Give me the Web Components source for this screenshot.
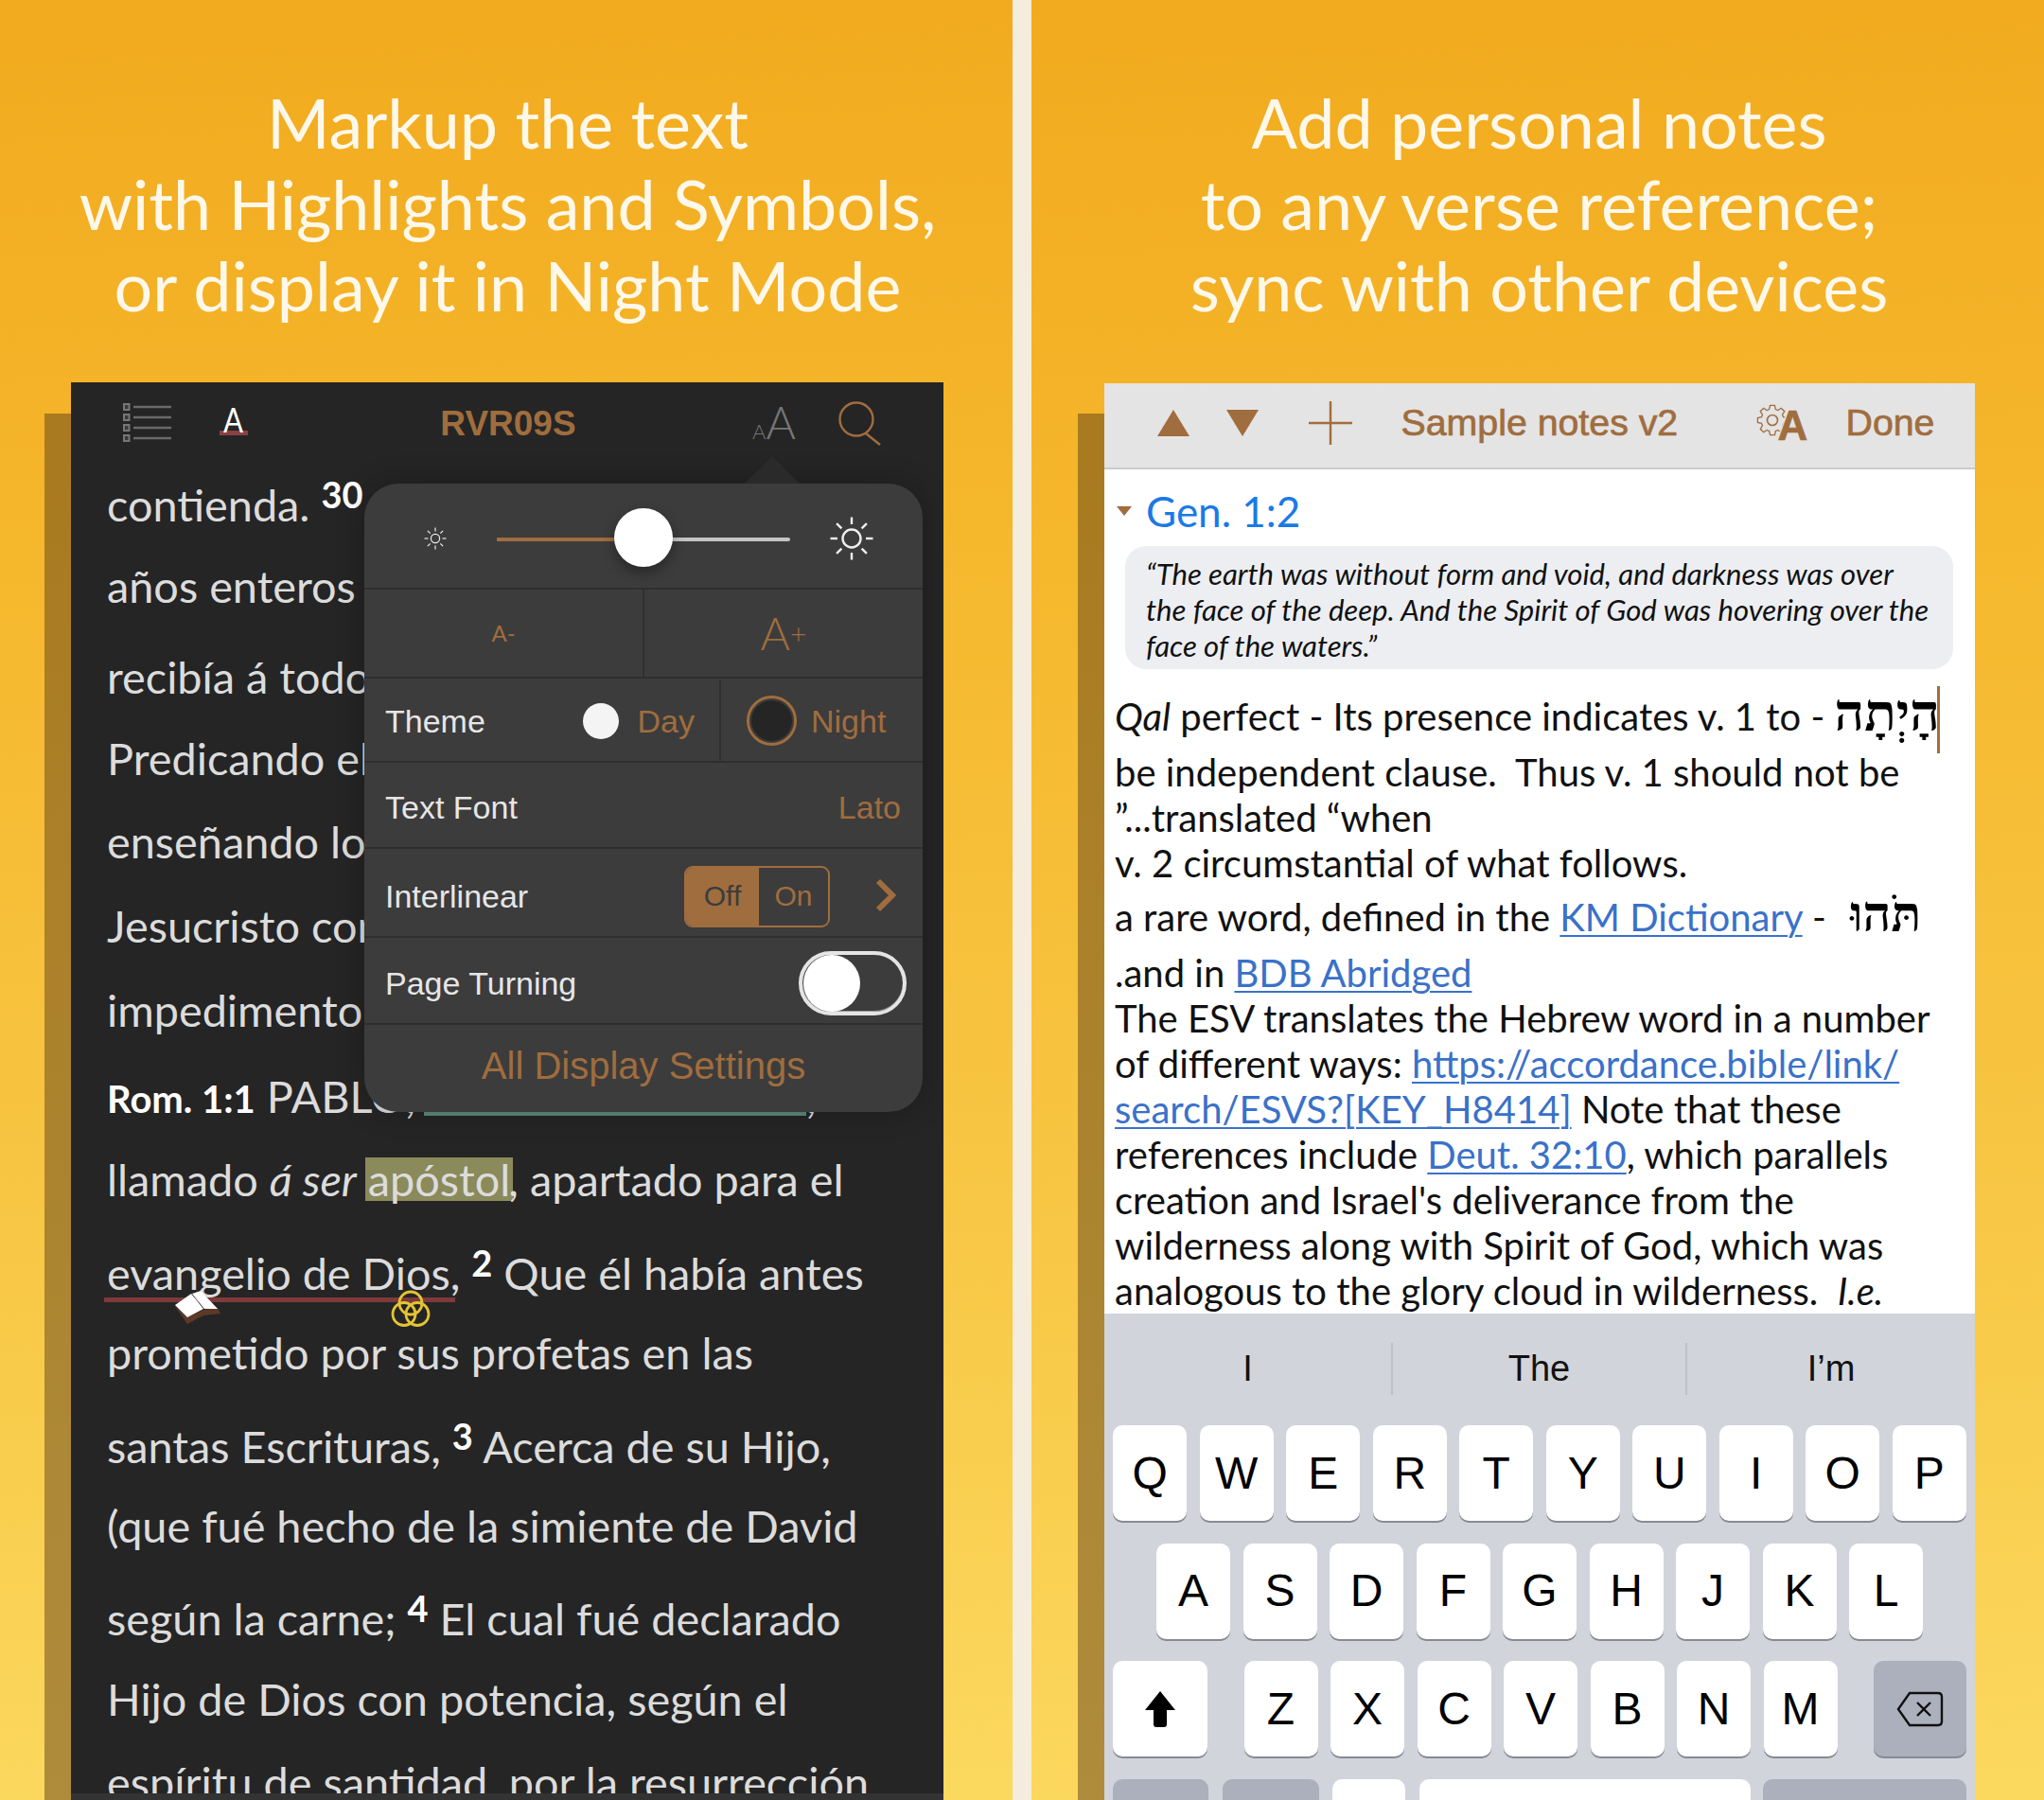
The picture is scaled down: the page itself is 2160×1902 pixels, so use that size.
<!DOCTYPE html>
<html lang="es">
<head>
<meta charset="utf-8">
<title>Accordance</title>
<style>
  html, body { margin: 0; padding: 0; }
  body { width: 2160px; height: 1902px; overflow: hidden; background: #f4ecdc; font-family: "Lato", sans-serif; }
  #page { display: flex; justify-content: space-between; width: 2160px; height: 1902px; }
  promo-panel.right { --ml: 77px; --mr: 73px; }
</style>
</head>
<body>
<div id="page">
  <promo-panel>
    <span slot="title">Markup the text<br>with Highlights and Symbols,<br>or display it in Night Mode</span>
    <night-reader></night-reader>
  </promo-panel>
  <promo-panel class="right">
    <span slot="title">Add personal notes<br>to any verse reference;<br>sync with other devices</span>
    <notes-screen></notes-screen>
  </promo-panel>
</div>

<script>
const ACCENT = '#a06d3e';

// yellow panel: heading on top, device below with its darker drop edge
class PromoPanel extends HTMLElement {
  constructor() {
    super();
    this.attachShadow({mode: 'open'});
    this.shadowRoot.innerHTML = `
      <style>
        :host {
          display: flex; flex-direction: column; align-items: stretch;
          width: 1070px; height: 1902px; overflow: hidden;
          background: linear-gradient(178deg, #f2aa1e 0%, #f5b72c 30%, #f8c846 70%, #fbd95f 100%);
          box-sizing: border-box;
        }
        .title {
          height: 404px; box-sizing: border-box; padding: 86px 0 0 3px;
          font: 400 71.8px/86px "Lato", sans-serif; color: #fdf8ea; text-align: center;
        }
        .device { position: relative; flex: 1; margin: 0 var(--mr, 73px) 0 var(--ml, 75px); min-height: 0; }
        .device::before {
          content: ""; position: absolute; left: -28px; top: 33px; bottom: 0; width: 28px;
          background: linear-gradient(#a97a1f, #ae8c3c);
        }
        ::slotted(*) { height: 100%; }
      </style>
      <div class="title"><slot name="title"></slot></div>
      <div class="device"><slot></slot></div>`;
  }
}
customElements.define('promo-panel', PromoPanel);

// one line of the reader; --h is the row it takes, --lh moves the text inside it
class ReaderLine extends HTMLElement {
  constructor() {
    super();
    this.attachShadow({mode: 'open'});
    this.shadowRoot.innerHTML = `
      <style>
        :host { display: block; white-space: nowrap; height: var(--h); line-height: var(--lh, var(--h)); }
      </style><slot></slot>`;
  }
}
customElements.define('reader-line', ReaderLine);

class DisplayPopover extends HTMLElement {
  constructor() {
    super();
    this.attachShadow({mode: 'open'});
    const rays = (cx, cy, r1, r2, n) => Array.from({length: n}, (_, i) => {
      const a = i * Math.PI * 2 / n;
      return `<line x1="${cx + Math.cos(a) * r1}" y1="${cy + Math.sin(a) * r1}" x2="${cx + Math.cos(a) * r2}" y2="${cy + Math.sin(a) * r2}"/>`;
    }).join('');
    this.shadowRoot.innerHTML = `
      <style>
        :host {
          position: absolute; left: 310px; top: 107px; width: 590px; height: 664px;
          display: flex; flex-direction: column;
          background: #3c3c3c; border-radius: 36px;
          font: 34px/1 "Liberation Sans", sans-serif; color: #e6e6e6;
          box-shadow: 0 0 30px rgba(0,0,0,.25);
        }
        .arrow {
          position: absolute; left: 402px; top: -29px; width: 0; height: 0;
          border: solid transparent; border-width: 0 29px 29px; border-bottom-color: #2a2a2a;
        }
        .row { display: flex; align-items: center; box-sizing: border-box; border-bottom: 2px solid #2f2f2f; padding: 0 23px 0 22px; }
        .row > .grow { flex: 1; }
        .accent { color: ${ACCENT}; }
        .slider { height: 112px; padding: 0 0 0 0; position: relative; }
        .track { position: absolute; left: 140px; top: 57px; width: 310px; height: 4px; border-radius: 2px; background: #c4c4c4; }
        .track i { display: block; width: 155px; height: 4px; background: ${ACCENT}; border-radius: 2px; }
        .knob { position: absolute; left: 264px; top: 26px; width: 62px; height: 62px; border-radius: 50%; background: #fff; box-shadow: 0 6px 14px rgba(0,0,0,.35); }
        .sun { position: absolute; stroke: #eee; fill: none; }
        .sizes { height: 94px; padding: 0; }
        .sizes div { flex: 1; height: 100%; display: flex; align-items: center; justify-content: center; color: ${ACCENT}; font-family: "Lato", sans-serif; font-weight: 300; }
        .sizes div:first-child { border-right: 2px solid #2f2f2f; font-size: 24px; font-weight: 400; }
        .sizes div:last-child { font-size: 48px; }
        .sizes sup { font-size: 30px; line-height: 0; vertical-align: 8px; }
        .theme { height: 89px; padding: 2px 0 0 22px; }
        .theme .lbl { width: 185.5px; }
        .day { display: flex; align-items: center; width: 167.5px; height: 100%; border-right: 2px solid #2f2f2f; }
        .dot { width: 38px; height: 38px; border-radius: 50%; background: #f4f4f4; margin: 0 20px 0 23px; flex: none; }
        .night { display: flex; align-items: center; padding-left: 27px; }
        .ring { width: 47px; height: 47px; border-radius: 50%; background: #252525; border: 3px solid ${ACCENT}; box-shadow: inset 0 0 0 2px #3c3c3c; margin-right: 15px; }
        .h91 { height: 91px; padding-top: 4px; }
        .h94 { height: 94px; padding-top: 8px; }
        .h92 { height: 92px; padding-top: 5px; }
        .seg { display: flex; width: 154px; height: 65px; border: 2px solid ${ACCENT}; border-radius: 9px; box-sizing: border-box; overflow: hidden; font-size: 30px; margin-right: 75px; color: ${ACCENT}; }
        .seg b { font-weight: 400; width: 77px; background: ${ACCENT}; color: #3c3c3c; display: flex; align-items: center; justify-content: center; }
        .seg span { flex: 1; display: flex; align-items: center; justify-content: center; }
        .chev { position: absolute; right: 27px; top: 417px; }
        .toggle { position: relative; width: 114px; height: 68px; border: 4px solid #e4e4e4; border-radius: 34px; box-sizing: border-box; margin-right: -6px; box-shadow: inset 0 -1px 0 #999; }
        .toggle i { position: absolute; left: 1px; top: 0; width: 60px; height: 60px; border-radius: 50%; background: #fff; }
        .all { flex: 1; display: flex; align-items: center; justify-content: center; font-size: 40px; color: ${ACCENT}; padding-bottom: 6px; }
      </style>
      <div class="arrow"></div>
      <div class="row slider">
        <svg class="sun" style="left:62px;top:45px" width="26" height="26" viewBox="0 0 26 26" stroke-width="1.2">
          <circle cx="13" cy="13" r="4.6"/>${rays(13, 13, 7.5, 11.5, 8)}
        </svg>
        <div class="track"><i></i></div>
        <div class="knob"></div>
        <svg class="sun" style="left:491px;top:34px" width="48" height="48" viewBox="0 0 48 48" stroke-width="2.4">
          <circle cx="24" cy="24" r="9.5"/>${rays(24, 24, 15, 22.5, 8)}
        </svg>
      </div>
      <div class="row sizes">
        <div>A-</div>
        <div>A<sup>+</sup></div>
      </div>
      <div class="row theme">
        <span class="lbl">Theme</span>
        <div class="day"><span class="dot"></span><span class="accent">Day</span></div>
        <div class="night"><span class="ring"></span><span class="accent">Night</span></div>
      </div>
      <div class="row h91"><span class="grow">Text Font</span><span class="accent">Lato</span></div>
      <div class="row h94"><span class="grow">Interlinear</span>
        <div class="seg"><b>Off</b><span>On</span></div>
      </div>
      <svg class="chev" width="24" height="36" viewBox="0 0 24 36" fill="none" stroke="${ACCENT}" stroke-width="6"><path d="M4 3 L19 18 L4 33"/></svg>
      <div class="row h92"><span class="grow">Page Turning</span>
        <div class="toggle"><i></i></div>
      </div>
      <div class="all">All Display Settings</div>`;
  }
}
customElements.define('display-popover', DisplayPopover);

class NightReader extends HTMLElement {
  constructor() {
    super();
    this.attachShadow({mode: 'open'});
    this.shadowRoot.innerHTML = `
      <style>
        :host { display: flex; flex-direction: column; position: relative; background: #252525; overflow: hidden; }
        .bar { height: 87px; flex: none; display: flex; align-items: center; padding-left: 54px; }
        .bar svg { flex: none; }
        .title { width: 550px; flex: none; margin-right: -17px; font: 700 37px/1 "Liberation Sans", sans-serif; color: ${ACCENT}; text-align: center; }
        .font-a { font: 400 37px/32px "Lato", sans-serif; color: #fff; border-bottom: 5px solid #8a4040; width: 30px; text-align: center; height: 28px; margin: -8px 0 0 48px; flex: none; }
        .font-a span { display: inline-block; transform: scaleX(.84); }
        .sizes { width: 45px; flex: none; font-family: "Lato", sans-serif; font-weight: 300; color: #777; line-height: 1; white-space: nowrap; margin-right: 46px; margin-top: -4px; }
        .sizes .s { font-size: 22px; }
        .sizes .b { font-size: 48px; }
        .text { flex: 1; padding-left: 38px; font: 400 46.8px "Lato", sans-serif; color: #dcdcdc; min-height: 0; }
        sup { font-size: 38px; font-weight: 700; color: #fff; line-height: 0; vertical-align: 14px; }
        b { color: #fff; font-size: 40px; }
        .hl { display: inline-block; line-height: 46px; height: 46px; background: #8a8a5a; box-shadow: 3px 0 0 #8a8a5a, -3px 0 0 #8a8a5a; margin-right: -2px; }
        .teal { display: inline-block; width: 404px; height: 4px; margin-left: -3px; vertical-align: -3px; background: #5e8b7a; }
        .red { position: relative; }
        .red::after { content: ""; position: absolute; left: -3px; right: -5px; bottom: -3px; height: 5px; background: #7f3a3a; }
        .mark { position: absolute; }
        .foot { position: absolute; left: 0; right: 0; bottom: 0; height: 7px; background: #333; }
      </style>
      <div class="bar">
        <svg width="55" height="44" viewBox="0 0 55 44" fill="none">
          <path d="M12 4 H52 M12 15 H52 M12 26 H52 M12 37 H52" stroke="#6a6a6a" stroke-width="2.6"/>
          <g stroke="#777" stroke-width="2" fill="#3a3a3a">
            <rect x="2" y="1" width="5.5" height="6"/><rect x="2" y="12" width="5.5" height="6"/><rect x="2" y="23" width="5.5" height="6"/><rect x="2" y="34" width="5.5" height="6"/>
          </g>
        </svg>
        <div class="font-a"><span>A</span></div>
        <div class="title">RVR09S</div>
        <div class="sizes"><span class="s">A</span><span class="b">A</span></div>
        <svg width="48" height="48" viewBox="0 0 48 48" fill="none" stroke="${ACCENT}" stroke-width="2.4"><circle cx="19" cy="19" r="17.5"/><path d="M29 34 L44 46"/></svg>
      </div>
      <div class="text">
        <reader-line style="--h:85px">contienda. <sup>30</sup></reader-line>
        <reader-line style="--h:97px;--lh:86px">años enteros en su casa de alquiler, y</reader-line>
        <reader-line style="--h:85px">recibía á todos los que á él venían,</reader-line>
        <reader-line style="--h:87px">Predicando el reino de Dios y</reader-line>
        <reader-line style="--h:89px">enseñando lo que es del Señor</reader-line>
        <reader-line style="--h:88px">Jesucristo con toda libertad, sin</reader-line>
        <reader-line style="--h:90px">impedimento.</reader-line>
        <reader-line style="--h:92px"><b>Rom. 1:1</b> PABLO, <span class="teal"></span>,</reader-line>
        <reader-line style="--h:98px;--lh:84px">llamado <i>á ser</i> <span class="hl">apóstol</span>, apartado para el</reader-line>
        <reader-line style="--h:87px"><span class="red">evangelio de Dios</span>, <sup>2</sup> Que él había antes</reader-line>
        <reader-line style="--h:96px;--lh:80px">prometido por sus profetas en las</reader-line>
        <reader-line style="--h:87px">santas Escrituras, <sup>3</sup> Acerca de su Hijo,</reader-line>
        <reader-line style="--h:94px;--lh:80px">(que fué hecho de la simiente de David</reader-line>
        <reader-line style="--h:88px">según la carne; <sup>4</sup> El cual fué declarado</reader-line>
        <reader-line style="--h:85px;--lh:83px">Hijo de Dios con potencia, según el</reader-line>
        <reader-line style="--h:88px">espíritu de santidad, por la resurrección</reader-line>
      </div>
      <svg class="mark" style="left:109px;top:960px" width="50" height="36" viewBox="0 0 50 36">
        <path d="M0 15 L14 35 L31 26 L49 24 L46 18 L31 20 L14 28 Z" fill="#5d3a25"/>
        <path d="M1 15 L18 3 L31 19 L14 28 Z" fill="#fff"/>
        <path d="M19 3 L28 0 L46 19 L32 19 Z" fill="#fff"/>
      </svg>
      <svg class="mark" style="left:338px;top:959px" width="42" height="40" viewBox="0 0 42 40" fill="none" stroke="#e4c433" stroke-width="2.8">
        <circle cx="21" cy="14" r="12"/><circle cx="14" cy="25.5" r="12"/><circle cx="28" cy="25.5" r="12"/>
      </svg>
      <display-popover></display-popover>
      <div class="foot"></div>`;
  }
}
customElements.define('night-reader', NightReader);

class KeyCap extends HTMLElement {
  constructor() {
    super();
    this.attachShadow({mode: 'open'});
    this.shadowRoot.innerHTML = `
      <style>
        :host {
          display: flex; align-items: center; justify-content: center; flex: none;
          width: var(--w, 78px); height: 101px; border-radius: 10px;
          background: #fff; box-shadow: 0 2px 0 #868a94;
          font: 400 48px/1 "Liberation Sans", sans-serif; color: #000;
        }
        :host([dark]) { background: #acb0bc; }
      </style><slot></slot>`;
  }
}
customElements.define('key-cap', KeyCap);

class IosKeyboard extends HTMLElement {
  constructor() {
    super();
    this.attachShadow({mode: 'open'});
    const keys = s => [...s].map(c => `<key-cap>${c}</key-cap>`).join('');
    this.shadowRoot.innerHTML = `
      <style>
        :host { display: flex; flex-direction: column; align-items: center; background: #d1d4db; flex: none; height: 515px; overflow: hidden; }
        .suggest { display: grid; grid-template-columns: 303px 311px 1fr; width: 100%; height: 118px; flex: none; align-items: start; font: 38px/1 "Liberation Sans", sans-serif; color: #111; text-align: center; box-sizing: border-box; padding-top: 31px; }
        .suggest span { height: 55px; line-height: 55px; }
        .suggest span + span { border-left: 2px solid #bdc0c8; }
        .row { display: flex; gap: 13.5px; margin-bottom: 23.5px; flex: none; }
        .wide { width: 902px; justify-content: space-between; gap: 0; }
        .group { display: flex; gap: 13.5px; }
        .last { width: 902px; }
      </style>
      <div class="suggest"><span>I</span><span>The</span><span>I’m</span></div>
      <div class="row">${keys('QWERTYUIOP')}</div>
      <div class="row">${keys('ASDFGHJKL')}</div>
      <div class="row wide">
        <key-cap style="--w:100px">
          <svg width="34" height="40" viewBox="0 0 34 40"><path d="M17 1 L33 21 L24 21 L24 36 Q24 39 21 39 L13 39 Q10 39 10 36 L10 21 L1 21 Z" fill="#000"/></svg>
        </key-cap>
        <div class="group">${keys('ZXCVBNM')}</div>
        <key-cap dark style="--w:98px">
          <svg width="50" height="38" viewBox="0 0 50 38" fill="none" stroke="#111" stroke-width="2.4"><path d="M14 2 H44 Q48 2 48 6 V32 Q48 36 44 36 H14 L2 19 Z"/><path d="M22 12 L36 26 M36 12 L22 26"/></svg>
        </key-cap>
      </div>
      <div class="row last">
        <key-cap dark style="--w:101px"></key-cap>
        <key-cap dark style="--w:102px;margin-left:1.5px"></key-cap>
        <key-cap style="--w:77px"></key-cap>
        <key-cap style="--w:350px;margin-left:1.5px"></key-cap>
        <key-cap dark style="--w:215px"></key-cap>
      </div>`;
  }
}
customElements.define('ios-keyboard', IosKeyboard);

class NotesScreen extends HTMLElement {
  constructor() {
    super();
    this.attachShadow({mode: 'open'});
    // outline of an 8-toothed gear, centre (18,18)
    const gear = Array.from({length: 8}, (_, i) => {
      const step = Math.PI / 4, a = i * step - Math.PI / 2;
      const pt = (r, d) => `${(18 + Math.cos(a + d) * r).toFixed(2)} ${(18 + Math.sin(a + d) * r).toFixed(2)}`;
      return `${i ? 'L' : 'M'}${pt(12, -step * .36)} L${pt(15.8, -step * .2)} L${pt(15.8, step * .2)} L${pt(12, step * .36)}`;
    }).join(' ') + ' Z';
    this.shadowRoot.innerHTML = `
      <style>
        :host { display: flex; flex-direction: column; background: #fff; overflow: hidden; width: 920px; margin-top: 1px; }
        .bar {
          height: 91px; flex: none; box-sizing: border-box; display: flex; align-items: center;
          background: #e4e4e4; border-bottom: 2px solid #cbcbcb; padding: 0 0 6px 56px;
          font: 400 39.3px/1 "Liberation Sans", sans-serif; color: ${ACCENT}; -webkit-text-stroke: .7px ${ACCENT};
        }
        .bar svg { flex: none; }
        .gear { position: relative; width: 50px; height: 40px; margin: 0 43px 0 86px; }
        .gear svg { position: absolute; left: -3px; top: -1px; }
        .gear b { position: absolute; left: 21px; top: 1px; font: 700 44px/1 "Liberation Sans", sans-serif; text-shadow: -2px 0 0 #e4e4e4; }
        .body { flex: 1; min-height: 0; overflow: hidden; padding: 0 22px 0 11px; font: 400 40px/48px "Lato", sans-serif; color: #111; }
        .ref { height: 81px; display: flex; align-items: center; font-size: 44px; color: #1a7ae6; gap: 15px; padding-top: 7px; box-sizing: border-box; }
        .ref::before { content: ""; width: 0; height: 0; margin-left: 2px; border: solid transparent; border-width: 10px 8px 0; border-top-color: #a06d3e; }
        .quote { margin-left: 11px; width: 875px; height: 130px; box-sizing: border-box; padding: 9.5px 10px 0 22px; background: #eceef2; border-radius: 22px; font: italic 400 31.1px/38px "Lato", sans-serif; color: #111; white-space: nowrap; }
        .notes { white-space: nowrap; padding-top: 17px; }
        .l { display: block; height: 48px; }
        .l.first { height: 68px; line-height: 66px; }
        .l.rare { height: 63px; line-height: 67px; }
        .l.bdb { height: 53px; line-height: 58px; }
        a { color: #3a71c9; text-decoration: underline; text-decoration-thickness: 2px; text-underline-offset: 4px; }
        .he { font: 700 55px/1 "Liberation Serif", serif; line-height: 0; color: #000; }
        .he.tohu { font-size: 52px; margin-left: 5px; }
        .caret { display: inline-block; width: 3px; height: 71px; background: ${ACCENT}; vertical-align: -24px; line-height: 0; margin-left: -3px; }
      </style>
      <div class="bar">
        <svg width="34" height="28" viewBox="0 0 34 28"><path d="M17 0 L34 28 H0 Z" fill="${ACCENT}"/></svg>
        <svg width="34" height="28" viewBox="0 0 34 28" style="margin-left:39px"><path d="M0 0 H34 L17 28 Z" fill="${ACCENT}"/></svg>
        <svg width="46" height="46" viewBox="0 0 46 46" style="margin-left:53px" stroke="${ACCENT}" stroke-width="2.4"><path d="M0 23 H46 M23 0 V46"/></svg>
        <span style="margin-left:51.5px;width:291px;white-space:nowrap">Sample notes v2</span>
        <div class="gear">
          <svg width="36" height="36" viewBox="0 0 36 36" fill="none" stroke="${ACCENT}" stroke-width="1.3">
            <path d="${gear}"/>
            <circle cx="18" cy="18" r="5.5" stroke-width="1.6"/>
          </svg>
          <b>A</b>
        </div>
        <span>Done</span>
      </div>
      <div class="body">
        <div class="ref">Gen. 1:2</div>
        <div class="quote">“The earth was without form and void, and darkness was over<br>the face of the deep. And the Spirit of God was hovering over the<br>face of the waters.”</div>
        <div class="notes">
          <span class="l first"><i>Qal</i> perfect - Its presence indicates v. 1 to - <span class="he">הָיְתָה</span><span class="caret"></span></span>
          <span class="l">be independent clause.&nbsp; Thus v. 1 should not be</span>
          <span class="l">”...translated “when</span>
          <span class="l">v. 2 circumstantial of what follows.</span>
          <span class="l rare">a rare word, defined in the <a>KM Dictionary</a> -&nbsp; <span class="he tohu">תֹּהוּ</span></span>
          <span class="l bdb">.and in <a>BDB Abridged</a></span>
          <span class="l">The ESV translates the Hebrew word in a number</span>
          <span class="l">of different ways: <a>https://accordance.bible/link/</a></span>
          <span class="l"><a>search/ESVS?[KEY_H8414]</a> Note that these</span>
          <span class="l">references include <a>Deut. 32:10</a>, which parallels</span>
          <span class="l">creation and Israel's deliverance from the</span>
          <span class="l">wilderness along with Spirit of God, which was</span>
          <span class="l">analogous to the glory cloud in wilderness.&nbsp; <i>I.e.</i></span>
        </div>
      </div>
      <ios-keyboard></ios-keyboard>`;
  }
}
customElements.define('notes-screen', NotesScreen);
</script>
</body>
</html>
